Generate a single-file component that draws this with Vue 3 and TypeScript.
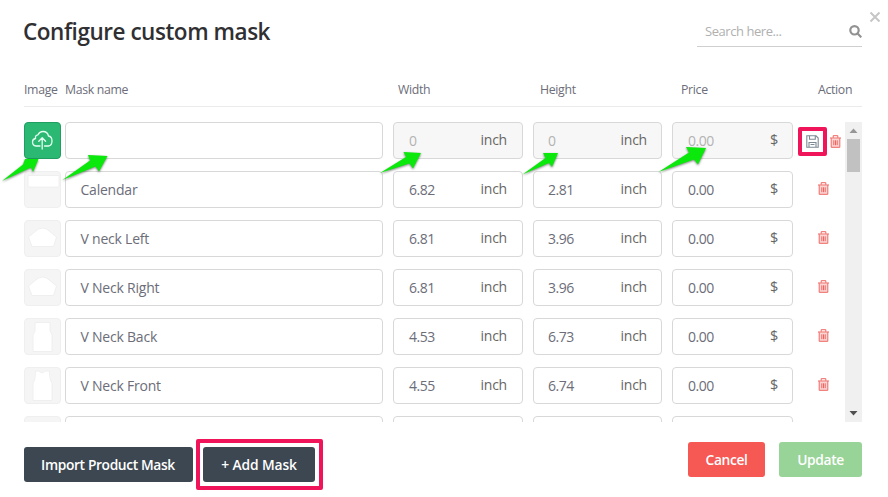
<script setup lang="ts">
type Shape = 'upload' | 'calendar' | 'cap' | 'back' | 'front' | 'none'
interface Mask { name: string; width: string; height: string; price: string; shape: Shape; draft?: boolean }

const masks: Mask[] = [
  { name: '', width: '0', height: '0', price: '0.00', shape: 'upload', draft: true },
  { name: 'Calendar', width: '6.82', height: '2.81', price: '0.00', shape: 'calendar' },
  { name: 'V neck Left', width: '6.81', height: '3.96', price: '0.00', shape: 'cap' },
  { name: 'V Neck Right', width: '6.81', height: '3.96', price: '0.00', shape: 'cap' },
  { name: 'V Neck Back', width: '4.53', height: '6.73', price: '0.00', shape: 'back' },
  { name: 'V Neck Front', width: '4.55', height: '6.74', price: '0.00', shape: 'front' },
  { name: '', width: '', height: '', price: '', shape: 'none' },
]

const shapes: Record<string, string> = {
  calendar: 'M4 4.5h31v10.5q0 1-1 1H5q-1 0-1-1z',
  cap: 'M4.500 17L10 12.500Q18.500 3.500 27 12.500L32.500 17L29.500 26.500H8z',
  back: 'M11 4.500H26V13L28 17V33.500H9V17L11 13z',
  front: 'M11.500 4H15Q17.500 7.500 21.500 4H25.500Q25.500 13 28 16V33.500H9V16Q11.500 13 11.500 4z',
}

// Hand-placed pointer arrows over the first row
const arrows: string[] = [
  'M2 181L23 164.500L25 159H38.500L33 172L31 167.500z',
  'M62.500 180L90 160.500L88 155L107.500 156L99 171.500L95.500 166.500z',
  'M380 173L406 157L403.500 152L421 153L413 168.500L409.500 163.500z',
  'M522.500 174.500L545.500 158L543 153L558 153L552 167L549 163z',
  'M658.500 172L689 152.500L686 147L706 148L698 164.500L694 159.500z',
]
</script>

<template>
  <main class="dialog">
    <svg class="close" viewBox="0 0 12 12"><path d="M1.500 1.500L10.500 10.500M10.500 1.500L1.500 10.500" /></svg>
    <header class="head">
      <h1>Configure custom mask</h1>
      <label class="search">
        <span>Search here...</span>
        <svg viewBox="0 0 13 13"><circle cx="5.500" cy="5.300" r="4.200" /><path d="M8.300 8.300L12.300 12.300" /></svg>
      </label>
    </header>

    <div class="columns">
      <span>Image</span><span>Mask name</span><span>Width</span><span>Height</span><span>Price</span><span>Action</span>
    </div>

    <div class="list">
      <div class="rows">
        <div v-for="(m, i) in masks" :key="i" class="row" :class="{ draft: m.draft }">
          <div class="thumb">
            <svg v-if="m.shape === 'upload'" class="cloud" viewBox="0 0 37 37">
              <path d="M16 24H12Q8.500 23.500 8.500 20Q8.500 17 11.500 16.500Q11 13 14 12.800Q15.500 9.500 19 9.500Q23.500 9.500 24.500 14Q28 14.500 28 19Q28 23.500 24.500 24H20.500" />
              <path d="M18.200 27V16M14.800 19.300L18.200 15.800L21.600 19.300" />
            </svg>
            <svg v-else-if="m.shape !== 'none'" class="shape" viewBox="0 0 37 37"><path :d="shapes[m.shape]" /></svg>
          </div>
          <div class="field name"><span>{{ m.name }}</span></div>
          <div class="field num"><span>{{ m.width }}</span><b v-if="m.width">inch</b></div>
          <div class="field num tall"><span>{{ m.height }}</span><b v-if="m.height">inch</b></div>
          <div class="field price"><span>{{ m.price }}</span><b v-if="m.price">$</b></div>
          <div class="actions">
            <span v-if="m.draft" class="save">
              <svg viewBox="0 0 13 13">
                <path d="M.8.8H10L12.200 3V12.200H.8z" /><path d="M3.500.8V4.300H9.300V.8M3 12V7.500H10V12M4.500 9.500H8.500" />
              </svg>
            </span>
            <svg v-if="m.shape !== 'none'" class="trash" viewBox="0 0 11 13">
              <path class="fill" d="M1.500 3.500H9.500V12H1.500z" />
              <path d="M0 3H11M3.200 2.700V.7H7.800V2.700M1.200 3.200V12.300H9.800V3.200M3.800 5.300V10.200M5.500 5.300V10.200M7.200 5.300V10.200" />
            </svg>
          </div>
        </div>
      </div>
      <div class="scrollbar">
        <svg viewBox="0 0 17 17"><path class="up" d="M4.500 11L8.500 6.500L12.500 11z" /></svg>
        <div class="thumb-bar"></div>
        <svg class="end" viewBox="0 0 17 17"><path class="down" d="M4.500 6H12.500L8.500 10.500z" /></svg>
      </div>
    </div>

    <footer class="foot">
      <button class="btn dark import"><span>Import Product Mask</span></button>
      <div class="marked"><button class="btn dark add"><span>+ Add Mask</span></button></div>
      <button class="btn cancel"><span>Cancel</span></button>
      <button class="btn update"><span>Update</span></button>
    </footer>

    <svg class="arrows" viewBox="0 0 888 497"><path v-for="a in arrows" :key="a" :d="a" /></svg>
  </main>
</template>

<style>
body { margin: 0; background: #fff; overflow: hidden; }
</style>

<style scoped>
* { box-sizing: border-box; }
.dialog {
  position: relative; width: 888px; height: 497px; padding: 16px 26px 0 24px;
  display: flex; flex-direction: column; overflow: hidden;
  font-family: "Open Sans", "Noto Sans", sans-serif; color: #6c6d79;
}
svg { display: block; flex: none; fill: none; }
.close { position: absolute; left: 869px; top: 11px; width: 12px; height: 12px; stroke: #c6c6c6; stroke-width: 2; }
.head { height: 31px; display: flex; justify-content: space-between; align-items: stretch; }
h1 { margin: 0 0 0 -1px; font-size: 22.500px; line-height: 31px; font-weight: 600; color: #303033; letter-spacing: -.46px; white-space: nowrap; }
.search {
  width: 165px; padding: 0 0 0 8px; border-bottom: 1px solid #cfcfcf;
  display: flex; justify-content: space-between; align-items: center;
  font-size: 13px; color: #b0b0b0; letter-spacing: -.45px;
}
.search svg { width: 13px; height: 13px; stroke: #929292; stroke-width: 2.200; }
.columns {
  height: 60px; width: 838px; padding-top: 34px; border-bottom: 1px solid #ebebeb;
  display: grid; grid-template-columns: 41px 333px 142px 141px 137px 44px;
  font-size: 12.300px; line-height: 18px; letter-spacing: -.32px; white-space: nowrap;
}
.list { margin-top: 15px; height: 300px; display: flex; overflow: hidden; }
.rows { width: 821px; display: flex; flex-direction: column; gap: 12px; }
.row { display: flex; height: 37px; flex: none; }
.thumb { width: 37px; height: 37px; margin-right: 4px; border: 1px solid #efefef; border-radius: 4px; background: #f5f5f5; }
.thumb svg { width: 37px; height: 37px; margin: -1px; }
.shape path { fill: #fff; stroke: #ececec; stroke-width: .8; }
.draft .thumb { background: #2ab873; border-color: #209d60; }
.cloud path { stroke: #e4fff0; stroke-width: 1.300; stroke-linecap: round; stroke-linejoin: round; }
.field {
  height: 37px; padding: 0 15px; border: 1px solid #d8d8d8; border-radius: 4px; background: #fff;
  display: flex; justify-content: space-between; align-items: center; font-size: 14px; letter-spacing: -.5px;
}
.field b { font-weight: 400; color: #666; font-size: 14px; padding-bottom: 2px; letter-spacing: -.22px; }
.name { width: 318px; margin-right: 10px; padding-left: 14.500px; letter-spacing: -.22px; }
.num { width: 130px; margin-right: 10px; }
.num.tall { width: 129px; padding: 0 14px; }
.price { width: 121px; }
.price b { margin-right: -1px; font-size: 14.500px; }
.draft .num, .draft .price { background: #f7f7f7; }
.draft .field span { color: #b3b3b3; }
.actions { width: 52px; display: flex; align-items: center; justify-content: center; padding: 0 0 2px 9px; }
.draft .actions { padding: 2px 0 0 5px; justify-content: flex-start; gap: 3px; }
.save { flex: none; width: 29px; height: 29px; border: 4px solid #f0145a; border-radius: 2px; display: flex; align-items: center; justify-content: center; }
.save svg { width: 13px; height: 13px; margin-top: -1px; stroke: #7e8a93; stroke-width: 1.100; }
.trash { width: 11px; height: 13px; stroke: #ee6560; stroke-width: 1; }
.draft .trash { margin-top: -1px; }
.trash .fill { fill: #fbd5d3; stroke: none; }
.scrollbar { width: 17px; height: 300px; background: #f0f0f0; display: flex; flex-direction: column; align-items: center; }
.scrollbar svg { width: 17px; height: 17px; }
.thumb-bar { width: 13px; height: 33px; background: #c1c1c1; }
.end { margin-top: auto; }
.up { fill: #969696; }
.down { fill: #505050; }
.foot { display: flex; align-items: flex-start; margin-top: 17px; }
.btn {
  height: 35px; padding: 0; border: 0; border-radius: 3px; color: #fff; display: flex; align-items: center; justify-content: center;
  font-family: inherit; font-size: 13.800px; font-weight: 600; white-space: nowrap; letter-spacing: -.37px;
}
.dark { background: #3c4752; }
.import { width: 169px; margin-top: 8px; padding-right: 1px; }
.marked { margin-left: 3px; width: 127px; height: 51px; padding: 4px 3px; border: 4px solid #f0145a; border-radius: 2px; }
.add { width: 112px; letter-spacing: -.1px; }
.cancel { width: 77px; margin: 3px 14px 0 auto; background: #f65854; }
.update { width: 83px; margin-top: 3px; background: #98d398; }
.arrows { position: absolute; left: 0; top: 0; width: 888px; height: 497px; pointer-events: none; filter: drop-shadow(0 1px 1px rgba(0, 0, 0, .5)); }
.arrows path { fill: #0be80b; }
</style>
